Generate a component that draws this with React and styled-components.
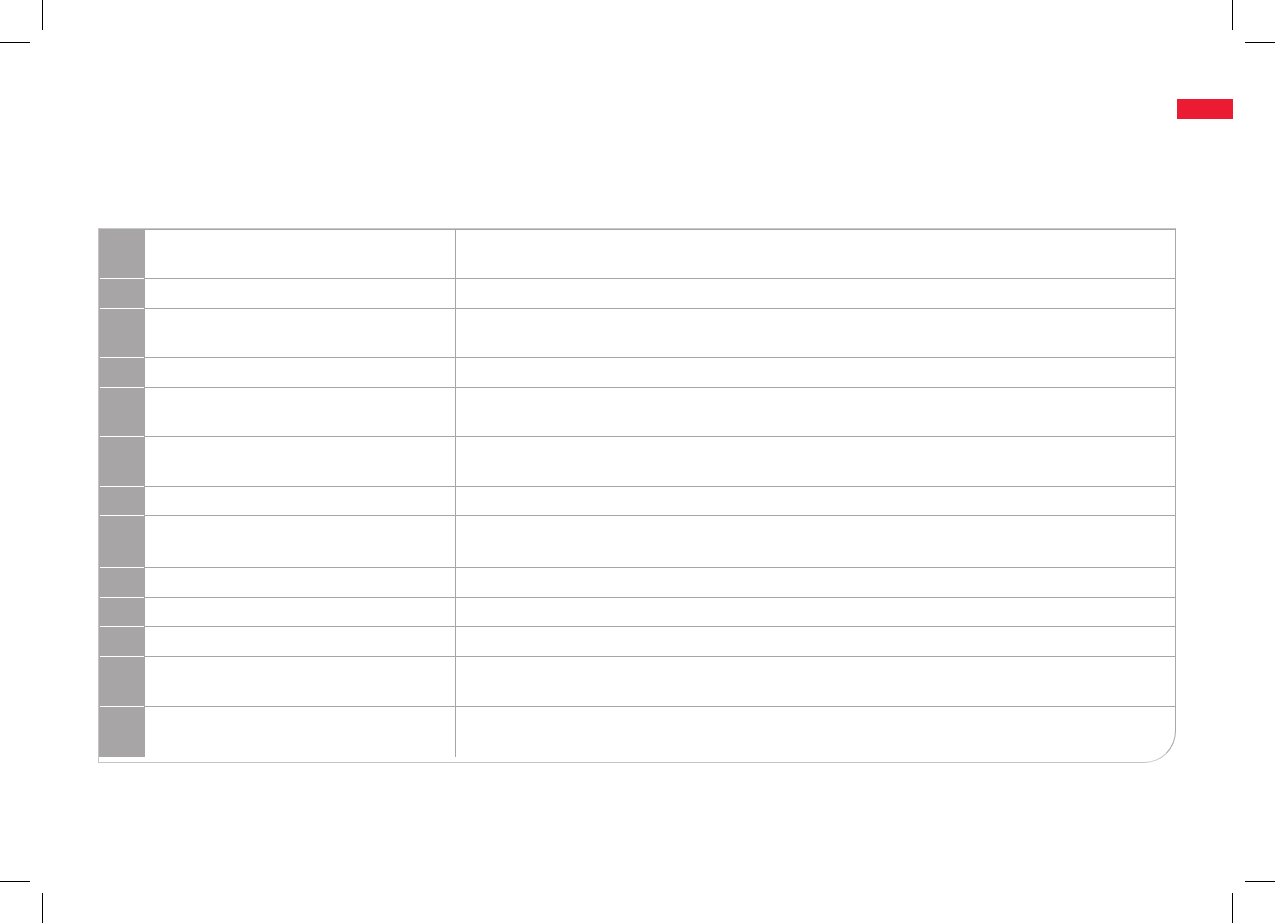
import React from 'react';
import styled, { createGlobalStyle } from 'styled-components';

const GlobalStyle = createGlobalStyle`
  html, body {
    margin: 0;
    padding: 0;
    background: #fff;
    font-family: 'Liberation Sans', Arial, sans-serif;
  }
`;

const Page = styled.div`
  position: relative;
  width: 1275px;
  height: 923px;
  padding-top: 99px;
  box-sizing: border-box;
  overflow: hidden;
`;

// print crop marks in the page corners
const Mark = styled.span`
  position: absolute;
  background: #000;
  width: ${(p) => (p.$dir === 'h' ? '30px' : '1px')};
  height: ${(p) => (p.$dir === 'h' ? '1px' : '30px')};
  ${(p) => p.$pos}
`;

const Header = styled.div`
  display: flex;
  justify-content: flex-end;
  padding-right: 42px;
`;

const Tab = styled.div`
  width: 56px;
  height: 20px;
  background: #ec1b34;
`;

const Frame = styled.div`
  margin: 109px 0 0 98px;
  width: 1078px;
  box-sizing: border-box;
  border: 1px solid #a8a8a8;
  border-left-color: #c4c4c4;
  border-bottom-color: #c4c4c4;
  border-top-color: #c8c8c8;
  border-bottom-right-radius: 32px;
  padding-bottom: 5px;
`;

const Row = styled.div`
  display: grid;
  grid-template-columns: 46px 310px 1fr;
  height: ${(p) => p.$h}px;
  box-sizing: border-box;
`;

const KeyCell = styled.div`
  position: relative;
  background: #a7a5a6;
  border-top: 1px solid #a7a5a6;

  ${Row}:not(:first-child) & {
    border-top-color: #a7a5a6;
    &::before {
      content: '';
      position: absolute;
      top: -1px;
      left: 1px;
      right: 1px;
      height: 1px;
      background: #fff;
    }
  }
`;

const LabelCell = styled.div`
  border-top: 1px solid #a6a6a6;
  font-size: 13px;
  color: #333;
`;

const ValueCell = styled.div`
  border-top: 1px solid #a6a6a6;
  border-left: 1px solid #a6a6a6;
  font-size: 13px;
  color: #333;
`;

const rows = [49, 30, 49, 30, 49, 50, 29, 52, 30, 29, 30, 50, 51];

const marks = [
  { dir: 'v', pos: 'left: 42px; top: 0;' },
  { dir: 'h', pos: 'left: 0; top: 42px;' },
  { dir: 'v', pos: 'left: 1232px; top: 0;' },
  { dir: 'h', pos: 'right: 0; top: 42px;' },
  { dir: 'h', pos: 'left: 0; top: 881px;' },
  { dir: 'v', pos: 'left: 42px; top: 893px;' },
  { dir: 'h', pos: 'right: 0; top: 881px;' },
  { dir: 'v', pos: 'left: 1232px; top: 893px;' },
];

const App = () => {
  return (
    <>
      <GlobalStyle />
      <Page>
        {marks.map((m, i) => (
          <Mark key={i} $dir={m.dir} $pos={m.pos} />
        ))}
        <Header>
          <Tab />
        </Header>
        <Frame>
          {rows.map((h, i) => (
            <Row key={i} $h={h}>
              <KeyCell />
              <LabelCell />
              <ValueCell />
            </Row>
          ))}
        </Frame>
      </Page>
    </>
  );
};

export default App;
